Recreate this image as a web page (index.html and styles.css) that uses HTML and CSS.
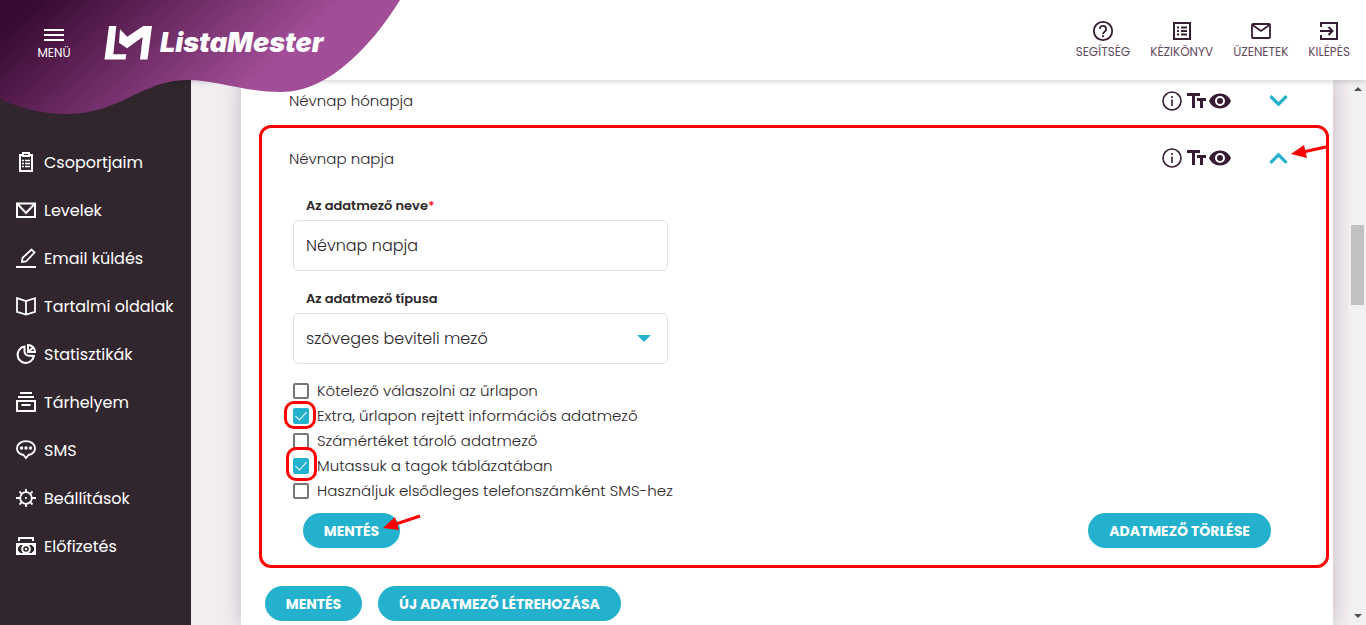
FILE: index.html
```html
<!DOCTYPE html>
<html lang="hu">
<head>
<meta charset="utf-8">
<title>ListaMester</title>
<link rel="stylesheet" href="styles.css">
</head>
<body>
<svg class="defs" aria-hidden="true">
  <symbol id="i-info" viewBox="0 0 20 20"><circle cx="10" cy="10" r="9" fill="none" stroke="currentColor" stroke-width="1.6"/><path d="M9.200 5h1.600v2H9.200zM9.200 8.500h1.600V15H9.200z" fill="currentColor"/></symbol>
  <symbol id="i-tt" viewBox="0 0 20 20"><path d="M0 2h13v3H8v12H5V5H0zM10 7h9v3h-3v7h-3v-7h-3z" fill="currentColor"/></symbol>
  <symbol id="i-eye" viewBox="1 4 22 16"><path d="M12 4.500C7 4.500 2.700 7.600 1 12c1.700 4.400 6 7.500 11 7.500s9.300-3.100 11-7.500c-1.700-4.400-6-7.500-11-7.500zM12 17a5 5 0 1 1 0-10 5 5 0 0 1 0 10zm0-8a3 3 0 1 0 0 6 3 3 0 0 0 0-6z" fill="currentColor"/></symbol>
  <symbol id="i-down" viewBox="0 0 20 13"><path d="M1.500 1.800 10 10.300l8.500-8.500" fill="none" stroke="currentColor" stroke-width="3.400"/></symbol>
  <symbol id="i-up" viewBox="0 0 20 13"><path d="M1.500 11.200 10 2.700l8.500 8.500" fill="none" stroke="currentColor" stroke-width="3.400"/></symbol>
</svg>

<header class="topbar">
  <svg class="wave" viewBox="0 0 410 120" aria-hidden="true">
    <defs><linearGradient id="plum" gradientUnits="userSpaceOnUse" x1="20" y1="22" x2="155" y2="171"><stop offset="0" stop-color="#390b32"/><stop offset="1" stop-color="#a14d97"/></linearGradient></defs>
    <path d="M0 0H400C383 27 368 45 350 61C330 79 307 92 280 92C243 92 218 80 187 80C142 80 120 114 67 114C42 114 20 108 0 99Z" fill="url(#plum)"/>
  </svg>
  <button class="menu" type="button">
    <svg width="20" height="14" viewBox="0 0 20 14" aria-hidden="true"><path d="M0 2h20M0 7h20M0 12h20" stroke="currentColor" stroke-width="2"/></svg>
    <span>MENÜ</span>
  </button>
  <a class="brand" href="#">
    <svg width="48" height="34" viewBox="104 26 48 34" aria-hidden="true"><path d="M109 26h7.300l-3 28.200h13l-.8 5.300H104.500zM120 29.300l7.300 7.400L143.300 26h8.700l-4.500 33.500H140L142.700 37 127 48.300 119 42.700z" fill="#fff"/></svg>
    <span>ListaMester</span>
  </a>
  <nav class="tools">
    <a href="#"><svg width="22" height="22" viewBox="0 0 22 22" fill="none" stroke="currentColor" stroke-width="1.800"><circle cx="11" cy="11" r="9.200"/><path d="M7.900 9a3.100 3.100 0 1 1 5 2.400c-1.200.9-1.900 1.400-1.900 2.700M11 15.200v2"/></svg><span>SEGÍTSÉG</span></a>
    <a href="#"><svg width="22" height="22" viewBox="0 0 22 22" fill="none" stroke="currentColor" stroke-width="2"><path d="M3 3h16v16H3zM6 7.500h2M6 11h2M6 14.500h2M10 7.500h6M10 11h6M10 14.500h6"/></svg><span>KÉZIKÖNYV</span></a>
    <a href="#"><svg width="22" height="22" viewBox="0 0 22 22" fill="none" stroke="currentColor" stroke-width="1.800"><rect x="2" y="4" width="18" height="14" rx="1"/><path d="m2.500 5 8.500 6 8.500-6"/></svg><span>ÜZENETEK</span></a>
    <a href="#"><svg width="22" height="22" viewBox="0 0 22 22" fill="none" stroke="currentColor" stroke-width="2"><path d="M3 7V3h16v16H3v-4M2 11h12M10.500 7l4 4-4 4"/></svg><span>KILÉPÉS</span></a>
  </nav>
</header>

<div class="body">
  <nav class="side">
    <a href="#"><svg width="20" height="20" viewBox="0 0 20 20"><path d="M4 3h12v16H4z" fill="none" stroke="currentColor" stroke-width="2"/><path d="M6 0h8v5H6z" fill="currentColor"/><path d="M8 2.500h4" stroke="#31262e"/><path d="M6 8.500h2M6 11.500h2M6 14.500h2M9 8.500h5M9 11.500h5M9 14.500h5" stroke="currentColor" stroke-width="1.500"/></svg>Csoportjaim</a>
    <a href="#"><svg width="20" height="20" viewBox="0 0 20 20" fill="none" stroke="currentColor" stroke-width="2"><path d="M1 3.500h18v13.500H1zM1.500 4l8.500 9 8.500-9"/></svg>Levelek</a>
    <a href="#"><svg width="20" height="20" viewBox="0 0 20 20" fill="none" stroke="currentColor" stroke-width="1.800"><path d="M0 19h20M6 14l.5-4 9-8.500 3 3-8.500 9z"/></svg>Email küldés</a>
    <a href="#"><svg width="20" height="20" viewBox="0 0 20 20" fill="none" stroke="currentColor" stroke-width="1.800"><path d="M1 2.200 10 5l9-2.800v13.600L10 18.500l-9-2.700zM10 5v13"/></svg>Tartalmi oldalak</a>
    <a href="#"><svg width="20" height="20" viewBox="0 0 20 20" fill="none" stroke="currentColor" stroke-width="2"><path d="M8.500 2.600a8.200 8.200 0 1 0 9.400 9.400l-4.900-.2A4.500 4.500 0 0 1 8.500 7zM12 1v7h7a7 7 0 0 0-7-7zM12 8l4.500-4"/></svg>Statisztikák</a>
    <a href="#"><svg width="20" height="20" viewBox="0 0 20 20" fill="none" stroke="currentColor" stroke-width="2"><path d="M4 1h12M2 5h16M1 9h18v10H1zM5.500 13h9"/></svg>Tárhelyem</a>
    <a href="#"><svg width="20" height="20" viewBox="0 0 20 20"><path d="M7.500 15C3.500 14.300 1 11.800 1 8.300 1 4.200 4.600 1.200 10 1.200s9 3 9 7.100c0 3.500-2.500 6-6.500 6.700L10 18z" fill="none" stroke="currentColor" stroke-width="1.800"/><g fill="currentColor"><circle cx="5.500" cy="8" r="1.700"/><circle cx="10" cy="8" r="1.700"/><circle cx="14.500" cy="8" r="1.700"/></g></svg>SMS</a>
    <a href="#"><svg width="20" height="20" viewBox="0 0 20 20" fill="none" stroke="currentColor" stroke-width="1.800"><circle cx="10" cy="10" r="5.800"/><path d="M10 1v3M10 16v3M0 10h4M16 10h4M3.500 3.500l2.300 2.300M14.200 14.200l2.300 2.300M3.500 16.500l2.300-2.300M14.200 5.800l2.300-2.300M9.200 10h1.600"/></svg>Beállítások</a>
    <a href="#"><svg width="20" height="20" viewBox="0 0 20 20" fill="none" stroke="currentColor" stroke-width="2"><path d="M3 5V2h14v3M1 8h18v10H1zM1 11l3-3M19 11l-3-3M1 15l3 3M19 15l-3 3"/><circle cx="10" cy="13" r="3.800"/><path d="M9 13h2"/></svg>Előfizetés</a>
  </nav>

  <main class="main">
    <div class="card">
      <div class="head head-closed">
        <span class="title">Névnap hónapja</span>
        <svg class="ic-info"><use href="#i-info"/></svg><svg class="ic-tt"><use href="#i-tt"/></svg><svg class="ic-eye"><use href="#i-eye"/></svg>
        <button class="toggle" type="button" aria-label="Kinyitás"><svg><use href="#i-down"/></svg></button>
      </div>

      <form class="panel">
        <div class="head">
          <span class="title">Névnap napja</span>
          <svg class="ic-info"><use href="#i-info"/></svg><svg class="ic-tt"><use href="#i-tt"/></svg><svg class="ic-eye"><use href="#i-eye"/></svg>
          <button class="toggle" type="button" aria-label="Bezárás"><svg><use href="#i-up"/></svg></button>
          <svg class="arrow arrow-toggle" viewBox="0 0 38 16" aria-hidden="true"><path d="M37 2.500 12 8" stroke="red" stroke-width="3"/><path d="M0 10 13 1l3 13z" fill="red"/></svg>
        </div>
        <div class="fields">
          <label class="caption" for="name">Az adatmező neve<span class="req">*</span></label>
          <input class="control" id="name" type="text" value="Névnap napja">
          <label class="caption caption-next" for="kind">Az adatmező típusa</label>
          <div class="pick"><select class="control" id="kind"><option>szöveges beviteli mező</option></select></div>
        </div>
        <div class="checks">
          <label><input type="checkbox">Kötelező válaszolni az űrlapon</label>
          <label class="ring"><input type="checkbox" checked>Extra, űrlapon rejtett információs adatmező</label>
          <label><input type="checkbox">Számértéket tároló adatmező</label>
          <label class="ring ring-tall"><input type="checkbox" checked>Mutassuk a tagok táblázatában</label>
          <label><input type="checkbox">Használjuk elsődleges telefonszámként SMS-hez</label>
        </div>
        <div class="actions">
          <div class="marked">
            <button class="btn btn-save" type="button">MENTÉS</button>
            <svg class="arrow arrow-save" viewBox="0 0 38 18" aria-hidden="true"><path d="M37 2 13 10" stroke="red" stroke-width="3"/><path d="M0 14 12 3l4 13z" fill="red"/></svg>
          </div>
          <button class="btn btn-delete" type="button">ADATMEZŐ TÖRLÉSE</button>
        </div>
      </form>

      <div class="footer">
        <button class="btn btn-save" type="button">MENTÉS</button>
        <button class="btn btn-new" type="button">ÚJ ADATMEZŐ LÉTREHOZÁSA</button>
      </div>
    </div>
  </main>

  <div class="scroll" aria-hidden="true"><i class="up"></i><i class="thumb"></i><i class="down"></i></div>
</div>
</body>
</html>
```
FILE: styles.css
```css
*, *::before, *::after { box-sizing: border-box; }
body { margin: 0; height: 100vh; display: flex; flex-direction: column; overflow: hidden; font-family: Poppins, Inter, "Open Sans", sans-serif; font-size: 15px; color: #2b262a; background: #f2edf1; }
a { color: inherit; text-decoration: none; }
button { font-family: inherit; cursor: pointer; }
svg { display: block; flex: none; }
.defs { position: absolute; width: 0; height: 0; }

.topbar { position: relative; z-index: 2; flex: none; height: 80px; display: flex; background: #fff; box-shadow: 0 1px 6px rgba(0, 0, 0, .2); }
.wave { position: absolute; left: 0; top: 0; width: 410px; height: 120px; }
.menu { position: relative; width: 108px; padding: 10px 0 0; border: 0; background: none; color: #fff; font-size: 12px; font-weight: 400; line-height: 18px; display: flex; flex-direction: column; align-items: center; justify-content: center; gap: 2px; }
.brand { position: relative; display: flex; align-items: center; gap: 8px; padding: 6px 0 0; margin-left: -4px; color: #fff; font: italic 900 27px/34px Inter, "Open Sans", sans-serif; }
.tools { margin-left: auto; display: flex; gap: 20px; padding: 20px 16px 0 0; color: #371c33; font-size: 12px; font-weight: 400; line-height: 18px; }
.tools a { display: flex; flex-direction: column; align-items: center; gap: 1px; }
.tools span { color: #5f4a5c; }

.body { flex: 1; min-height: 0; display: flex; }
.side { flex: none; width: 191px; padding: 58px 0 0 16px; background: #31262e; color: #fff; font-size: 16px; }
.side a { height: 48px; display: flex; align-items: center; gap: 8px; white-space: nowrap; }
.main { flex: 1; min-width: 0; padding: 0 16px 0 50px; }
.card { height: 100%; padding: 0 4px 0 18px; background: #fff; box-shadow: 0 0 18px rgba(50, 35, 50, .25); }

.head { position: relative; display: flex; align-items: center; height: 60px; padding: 0 38px 0 27px; font-weight: 300; color: #2b262a; }
.head-closed { height: 45px; padding: 0 41px 4px 30px; }
.title { margin-right: auto; }
.ic-info, .ic-tt, .ic-eye { color: #371c33; height: 20px; }
.ic-info { width: 20px; }
.ic-tt { width: 20px; margin-left: 5px; }
.ic-eye { width: 22px; height: 16px; margin-left: 2px; }
.toggle { margin-left: 38px; padding: 0; border: 0; background: none; color: #24b1ce; }
.toggle svg { width: 19px; height: 13px; }

.panel { border: 3px solid red; border-radius: 12px; padding-bottom: 17px; }
.fields { width: 375px; margin-left: 31px; padding-top: 8px; }
.caption { display: block; height: 24px; padding-left: 13px; font-size: 13px; font-weight: 600; line-height: 20px; }
.caption-next { margin-top: 18px; }
.req { color: #f22; }
.control { display: block; width: 100%; height: 51px; padding: 0 12px; border: 1px solid #e2e2e2; border-radius: 5px; background: #fff; color: #2b262a; font: 300 16px/24px Poppins, Inter, "Open Sans", sans-serif; appearance: none; }
.pick { position: relative; }
.pick::after { content: ""; position: absolute; right: 17px; top: 22px; border: 7px solid transparent; border-top-color: #24b1ce; border-bottom: 0; pointer-events: none; }

.checks { margin: 14px 0 0 31px; display: flex; flex-direction: column; align-items: flex-start; font-weight: 300; }
.checks label { position: relative; display: flex; align-items: center; gap: 8px; height: 25px; }
.checks input { position: relative; appearance: none; width: 16px; height: 16px; margin: 0; border: 2px solid #777; border-radius: 2px; background: #fff; }
.checks input:checked { border-color: #24b1ce; background: #24b1ce; }
.checks input:checked::after { content: ""; position: absolute; left: 3px; top: -1px; width: 6px; height: 11px; border: solid #fff; border-width: 0 1px 1px 0; transform: rotate(42deg); }
.ring::before { content: ""; position: absolute; left: -9px; top: -2px; width: 32px; height: 28px; border: 3px solid red; border-radius: 10px; }
.ring-tall::before { left: -7px; top: -6px; width: 31px; height: 34px; }

.actions { display: flex; justify-content: space-between; margin-top: 10px; padding: 0 55px 0 41px; }
.marked { position: relative; }
.btn { display: block; height: 35px; padding: 0; border: 0; border-radius: 18px; background: #24b1ce; color: #fff; font-size: 14px; font-weight: 700; line-height: 20px; }
.btn-save { width: 97px; }
.btn-delete { width: 183px; }
.btn-new { width: 243px; }
.arrow { position: absolute; }
.arrow-toggle { width: 38px; height: 16px; right: -3px; top: 16px; }
.arrow-save { width: 38px; height: 18px; left: 80px; top: 1px; }
.footer { display: flex; gap: 16px; padding: 18px 0 0 6px; }

.scroll { flex: none; width: 17px; background: #f1f1f1; display: flex; flex-direction: column; align-items: center; padding: 7px 0; }
.up, .down { border: 4px solid transparent; }
.up { border-top: 0; border-bottom-color: #505050; }
.down { margin-top: auto; border-bottom: 0; border-top-color: #505050; }
.thumb { width: 13px; height: 80px; margin-top: 134px; background: #c1c1c1; }
```
